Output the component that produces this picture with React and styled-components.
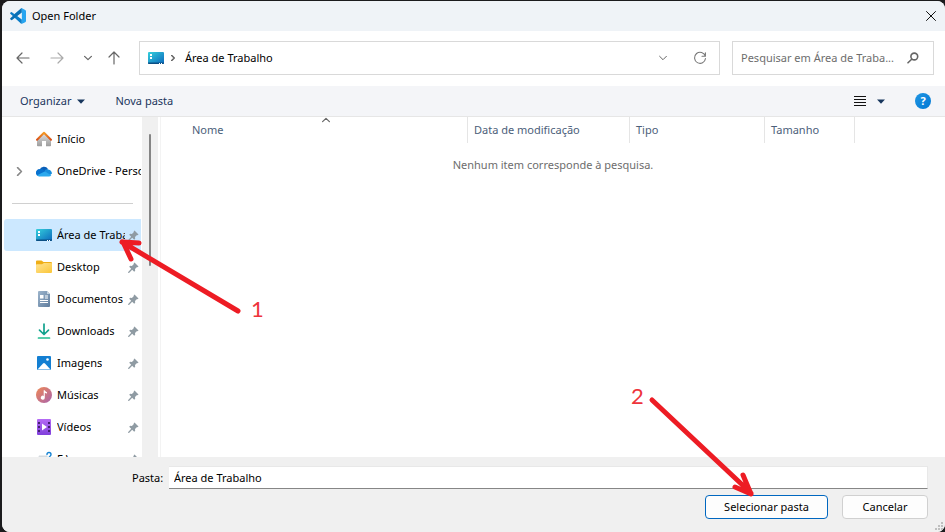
import React from "react";
import styled, { createGlobalStyle } from "styled-components";

const GlobalStyle = createGlobalStyle`
  *, *::before, *::after { box-sizing: border-box; }
  body {
    margin: 0;
    background: #1b1b1d;
    font-family: "Noto Sans", "Open Sans", sans-serif;
    font-size: 11px;
    line-height: 16px;
    color: #000;
  }
  button, input { font: inherit; color: inherit; }
  button { background: none; border: 0; padding: 0; }
  svg { display: block; flex: none; }
`;

const Screen = styled.div`
  position: relative;
  height: 100vh;
  padding: 1px 0 0 2px;
  overflow: hidden;
`;

const Dialog = styled.div`
  display: flex;
  flex-direction: column;
  height: 100%;
  border-radius: 8px;
  overflow: hidden;
  background: #fff;
`;

const TitleBar = styled.header`
  display: flex;
  align-items: center;
  gap: 6px;
  height: 30px;
  flex: none;
  padding: 0 8px;
  background: #eff3f7;
`;

const Title = styled.h1`
  flex: 1;
  margin: 0;
  font-size: 11px;
  font-weight: 400;
`;

const IconButton = styled.button`
  display: flex;
  align-items: center;
  justify-content: center;
  width: ${(p) => p.$width || 16}px;
  height: 24px;
  flex: none;
`;

const NavBar = styled.nav`
  display: flex;
  align-items: center;
  gap: 12px;
  flex: none;
  padding: 10px 11px 11px 13px;
`;

const NavButtons = styled.div`
  display: flex;
  align-items: center;
  gap: 13px;
  width: 112px;
`;

const Field = styled.div`
  display: flex;
  align-items: center;
  height: 34px;
  border: 1px solid #d9d9d9;
  background: #fff;
`;

const AddressBar = styled(Field)`
  flex: 1;
  gap: 6px;
  padding: 0 11px 0 8px;
`;

const Crumb = styled.button`
  flex: 1;
  padding-left: 3px;
  text-align: left;
`;

const AddressActions = styled.div`
  display: flex;
  gap: 21px;
`;

const SearchBox = styled(Field)`
  width: 202px;
  padding: 0 14px 0 8px;
`;

const SearchInput = styled.input`
  flex: 1;
  min-width: 0;
  padding: 0;
  border: 0;
  outline: 0;
  background: none;
  &::placeholder { color: #6d6d6d; opacity: 1; }
`;

const Toolbar = styled.div`
  display: flex;
  align-items: center;
  height: 31px;
  flex: none;
  padding: 0 14px 0 18px;
  border-bottom: 1px solid #e6e6e6;
  background: #f4f5f8;
  color: #1b365d;
`;

const ToolButton = styled.button`
  display: flex;
  align-items: center;
  gap: 6px;
  margin-right: 30px;
`;

const ViewTools = styled.div`
  display: flex;
  align-items: center;
  gap: 8px;
  margin-left: auto;
`;

const HelpButton = styled.button`
  width: 16px;
  height: 16px;
  margin-left: 20px;
  border-radius: 50%;
  background: linear-gradient(135deg, #2196e3, #0078d4);
  color: #fff;
  font-size: 11px;
  font-weight: 700;
  line-height: 16px;
  text-align: center;
`;

const Body = styled.div`
  display: flex;
  flex: 1;
  min-height: 0;
`;

const Sidebar = styled.aside`
  width: 140px;
  flex: none;
  padding: 6px 1px 0 2px;
  overflow: hidden;
`;

const List = styled.ul`
  margin: 0;
  padding: 0;
  list-style: none;
`;

const Place = styled.li`
  display: flex;
  align-items: center;
  height: 32px;
  border-radius: 3px 0 0 3px;
  background: ${(p) => (p.$selected ? "#cce8ff" : "transparent")};
`;

const Expander = styled.span`
  display: flex;
  justify-content: center;
  width: 30px;
  flex: none;
`;

const PlaceLink = styled.a`
  display: flex;
  align-items: center;
  gap: 5px;
  flex: 1;
  min-width: 0;
  padding-left: 2px;
  color: #000;
  text-decoration: none;
`;

const PlaceName = styled.span`
  overflow: hidden;
  white-space: nowrap;
`;

const Divider = styled.hr`
  height: 1px;
  margin: 16px 8px 15px;
  border: 0;
  background: #d0d0d0;
`;

const ScrollTrack = styled.div`
  width: 16px;
  flex: none;
  padding: 17px 0 0 7px;
  background: #f0f0f0;
`;

const ScrollThumb = styled.div`
  width: 2px;
  height: 132px;
  border-radius: 1px;
  background: #858585;
`;

const Main = styled.main`
  flex: 1;
  min-width: 0;
  margin-left: 2px;
  border-left: 1px solid #f3f3f3;
`;

const FileTable = styled.table`
  width: 100%;
  table-layout: fixed;
  border-collapse: separate;
  border-spacing: 0;
`;

const Column = styled.col`
  width: ${(p) => (p.$width ? `${p.$width}px` : "auto")};
`;

const HeadCell = styled.th`
  position: relative;
  height: 26px;
  padding: 0 0 0 ${(p) => (p.$first ? 31 : 6)}px;
  border-right: ${(p) => (p.$last ? 0 : "1px solid #e5e5e5")};
  color: #4c607a;
  font-weight: 400;
  text-align: left;
`;

const SortMark = styled.span`
  position: absolute;
  top: -1px;
  left: 31px;
  right: 8px;
  display: flex;
  justify-content: center;
`;

const EmptyCell = styled.td`
  height: 44px;
  padding: 0;
  color: #6d6d6d;
  text-align: center;
`;

const Footer = styled.footer`
  position: relative;
  flex: none;
  padding: 9px 17px 13px 130px;
  background: #f0f0f0;
`;

const FolderRow = styled.div`
  display: flex;
  align-items: center;
  gap: 6px;
`;

const FolderLabel = styled.label`
  width: 31px;
  white-space: nowrap;
`;

const FolderInput = styled.input`
  flex: 1;
  min-width: 0;
  height: 23px;
  padding: 0 5px;
  border: 1px solid #e8e8e8;
  border-bottom-color: #868686;
  border-left: 0;
  outline: 0;
  background: #fff;
`;

const Actions = styled.div`
  display: flex;
  justify-content: flex-end;
  gap: 14px;
  padding-top: 6px;
`;

const ActionButton = styled.button`
  width: ${(p) => p.$width}px;
  height: 24px;
  border: 1px solid ${(p) => (p.$primary ? "#0067c0" : "#d0d0d0")};
  border-radius: 4px;
  background: #fdfdfd;
`;

const Grip = styled.span`
  position: absolute;
  right: 1px;
  bottom: 1px;
`;

const Markup = styled.svg`
  position: absolute;
  top: 0;
  left: 0;
  pointer-events: none;
`;

const StepNumber = styled.span`
  position: absolute;
  top: ${(p) => p.$top}px;
  left: ${(p) => p.$left}px;
  color: #ee333b;
  font-family: Lato, sans-serif;
  font-size: 22px;
  line-height: 24px;
`;

const line = { fill: "none", strokeLinecap: "round", strokeLinejoin: "round" };

const VsCodeIcon = () => (
  <svg width="16" height="16" viewBox="0 0 100 100">
    <path d="M72 1 31 41 12 26q-3-2-6 0L2 30q-3 3 0 6l66 61 6 2V72L28 37Z" fill="#0a7dc8" />
    <path d="M2 64q-3 3 0 6l5 5q3 2 6 0L74 28V1q-3-1-6 2Z" fill="#0a70b4" />
    <path d="M68 4q6-4 6 4v84q0 8-6 4l7 3 20-10q5-2 5-8V20q0-6-5-8L75 1Z" fill="#27a5f0" />
  </svg>
);

const CloseIcon = () => (
  <svg width="10" height="10" viewBox="0 0 10 10" stroke="#111" {...line}>
    <path d="M.5.5l9 9M9.500.5l-9 9" />
  </svg>
);

const ArrowIcon = ({ turn = 0, color = "#666" }) => (
  <svg width="14" height="14" viewBox="0 0 14 14" stroke={color} strokeWidth="1.200" {...line}>
    <g transform={`rotate(${turn} 7 7)`}>
      <path d="M13 7H1M6 2 1 7l5 5" />
    </g>
  </svg>
);

const Chevron = ({ turn = 0, width = 8, color = "#666", weight = 1.2 }) => (
  <svg width={width} height={width} viewBox="0 0 8 8" stroke={color} strokeWidth={weight} {...line}>
    <path d="M.6 2.300 4 5.700l3.400-3.400" transform={`rotate(${turn} 4 4)`} />
  </svg>
);

const RefreshIcon = () => (
  <svg width="14" height="14" viewBox="0 0 14 14" stroke="#777" strokeWidth="1.100" {...line}>
    <path d="M12.300 5.200A5.500 5.500 0 1 0 12.500 7.500M12.400 1.800v3.500H9" />
  </svg>
);

const SearchIcon = () => (
  <svg width="12" height="12" viewBox="0 0 12 12" stroke="#666" strokeWidth="1.600" {...line}>
    <circle cx="7.300" cy="4.500" r="3.400" />
    <path d="M4.700 7.200 1 10.800" />
  </svg>
);

const DropCaret = () => (
  <svg width="8" height="5" viewBox="0 0 8 5">
    <path d="M0 .5h8L4 4.800Z" fill="#17365d" />
  </svg>
);

const ListIcon = () => (
  <svg width="12" height="12" viewBox="0 0 12 12" shapeRendering="crispEdges">
    <path d="M0 1.500h12M0 4.500h12M0 7.500h12M0 10.500h12" stroke="#111" />
  </svg>
);

const DesktopIcon = () => (
  <svg width="16" height="16" viewBox="0 0 16 16">
    <defs>
      <linearGradient id="desk" x1="0" y1="0" x2="1" y2="1">
        <stop stopColor="#35d0dc" />
        <stop offset="1" stopColor="#0b68bd" />
      </linearGradient>
    </defs>
    <rect y="2" width="16" height="12" rx="1" fill="url(#desk)" />
    <path d="M0 12.500h16v.5q0 1-1 1H1q-1 0-1-1Z" fill="#0b4f84" />
    <path d="M2 4h2v2H2zM2 7h2v2H2zM11 13h1v1h-1zM13 13h1v1h-1z" fill="#fff" />
  </svg>
);

const HomeIcon = () => (
  <svg width="16" height="16" viewBox="0 0 16 16">
    <defs>
      <linearGradient id="wall" x1="0" y1="0" x2="0" y2="1">
        <stop stopColor="#dedede" />
        <stop offset="1" stopColor="#9c9c9c" />
      </linearGradient>
      <linearGradient id="roof" x1="0" y1="0" x2="0" y2="1">
        <stop stopColor="#f59a23" />
        <stop offset="1" stopColor="#d8501a" />
      </linearGradient>
    </defs>
    <path d="M8 2.500 1 9v5.500q0 .8.8.8H6V10h4v5.300h4.200q.8 0 .8-.8V9Z" fill="url(#wall)" />
    <path d="M1 8.800 8 1.800l7 7" stroke="url(#roof)" strokeWidth="2" {...line} />
  </svg>
);

const CloudIcon = () => (
  <svg width="16" height="16" viewBox="0 0 16 16">
    <path d="M3.500 7A4.700 4.700 0 0 1 12 6l-4 4-6 2A3.300 3.300 0 0 1 3.500 6Z" fill="#0a5fb8" />
    <path d="M3.800 6.200Q6 5.500 8 7.200l5 4-10 2A3.500 3.500 0 0 1 3.800 6.200Z" fill="#0872cf" />
    <path d="M8.500 7.800Q10 5.800 12.300 6.500 15.500 7 16 10.500l-2.500 2Z" fill="#168ddd" />
    <path d="m8.700 8.400 6.600 3.900q-.8 1.200-2.500 1.200H4q-1.800 0-2.900-1.300Z" fill="#2ba9ee" />
  </svg>
);

const FolderIcon = () => (
  <svg width="16" height="16" viewBox="0 0 16 16">
    <defs>
      <linearGradient id="folder" x1="0" y1="0" x2="1" y2="1">
        <stop stopColor="#ffe393" />
        <stop offset="1" stopColor="#fbc638" />
      </linearGradient>
    </defs>
    <path d="M0 2.500q0-1 1-1h4.500L7.500 3H15q1 0 1 1v3H0Z" fill="#efae16" />
    <path d="M0 6q0-.7.800-.7H6L8 4h7.200q.8 0 .8.800V13q0 1-1 1H1q-1 0-1-1Z" fill="url(#folder)" />
  </svg>
);

const DocumentIcon = () => (
  <svg width="16" height="16" viewBox="0 0 16 16">
    <defs>
      <linearGradient id="doc" x1="0" y1="0" x2="1" y2="1">
        <stop stopColor="#9db5cc" />
        <stop offset="1" stopColor="#607d9e" />
      </linearGradient>
    </defs>
    <path d="M2 1q0-1 1-1h8l3 3v12q0 1-1 1H3q-1 0-1-1Z" fill="url(#doc)" />
    <path d="M11 0v3h3Z" fill="#c8d6e2" />
    <path d="M4 4h3.500v3.500H4zM9 4.500h3v1H9zM9 6.500h3v1H9zM4 9h8v1H4zM4 11h8v1H4z" fill="#fff" />
  </svg>
);

const DownloadIcon = () => (
  <svg width="16" height="16" viewBox="0 0 16 16" strokeWidth="1.700" {...line}>
    <path d="M8 1v10M3.500 7.200 8 11.500l4.500-4.300" stroke="#12a28d" />
    <path d="M2.500 15h11" stroke="#20bd90" />
  </svg>
);

const ImageIcon = () => (
  <svg width="16" height="16" viewBox="0 0 16 16">
    <rect x="1" y="1" width="14" height="14" rx="1" fill="#137fd2" />
    <path d="M1.500 14.500 7 8.500q1-1 2 0l5.500 6Z" fill="#fff" />
    <circle cx="11.500" cy="4.500" r="1.300" fill="#fff" />
  </svg>
);

const MusicIcon = () => (
  <svg width="16" height="16" viewBox="0 0 16 16">
    <defs>
      <linearGradient id="music" x1="0" y1="0" x2="1" y2="1">
        <stop stopColor="#ef8954" />
        <stop offset="1" stopColor="#a963ae" />
      </linearGradient>
    </defs>
    <circle cx="8" cy="8" r="8" fill="url(#music)" />
    <path d="M7.700 3.200h1q.8 1.600 2.300 2v1.300q-1.300 0-2.200-.8v5a2 2 0 1 1-1.100-1.800Z" fill="#fff" />
  </svg>
);

const VideoIcon = () => (
  <svg width="16" height="16" viewBox="0 0 16 16">
    <defs>
      <linearGradient id="video" x1="0" y1="0" x2="0" y2="1">
        <stop stopColor="#b56bf5" />
        <stop offset="1" stopColor="#8040db" />
      </linearGradient>
    </defs>
    <rect x="1" y="0" width="14" height="16" rx="1" fill="url(#video)" />
    <path d="M2 3h2v2H2zM2 7h2v2H2zM2 11h2v2H2zM12 3h2v2h-2zM12 7h2v2h-2zM12 11h2v2h-2z" fill="#43206f" />
    <path d="M6 4.500 11 8l-5 3.500Z" fill="#fff" />
  </svg>
);

const UnknownDriveIcon = () => (
  <svg width="16" height="16" viewBox="0 0 16 16">
    <path d="M3 4.500h8l3 5H1Z" fill="#d5dade" />
    <path d="M1 9.500h14v4H1Z" fill="#8c959c" />
    <path d="M11 3.500q0-2 2-2t2 2q0 1-1 1.700t-1 1.800" stroke="#1683d2" strokeWidth="1.400" {...line} />
  </svg>
);

const PinIcon = () => (
  <svg width="11" height="11" viewBox="0 0 11 11">
    <path d="m6.500.5 4 4-.8.8-.7-.2-2 2 .2 1.700-1 1-2-2L1 11l-1-.2.2-.8 3-3.200-2-2 1-1 1.700.2 2-2-.2-.7Z" fill="#8f9ba3" />
  </svg>
);

const GripIcon = () => (
  <svg width="9" height="9" viewBox="0 0 9 9" shapeRendering="crispEdges">
    <path d="M6 0h2v2H6zM3 3h2v2H3zM6 3h2v2H6zM0 6h2v2H0zM3 6h2v2H3zM6 6h2v2H6z" fill="#bfbfbf" />
  </svg>
);

const PLACES = [
  { name: "Início", icon: HomeIcon },
  { name: "OneDrive - Personal", icon: CloudIcon, expandable: true },
];

const PINNED = [
  { name: "Área de Trabalho", icon: DesktopIcon, selected: true },
  { name: "Desktop", icon: FolderIcon },
  { name: "Documentos", icon: DocumentIcon },
  { name: "Downloads", icon: DownloadIcon },
  { name: "Imagens", icon: ImageIcon },
  { name: "Músicas", icon: MusicIcon },
  { name: "Vídeos", icon: VideoIcon },
  { name: "F:\\", icon: UnknownDriveIcon },
];

const PinSlot = styled.span`
  width: 16px;
  flex: none;
  padding-left: 3px;
`;

function PlaceList({ places, pinned }) {
  return (
    <List>
      {places.map(({ name, icon: Icon, expandable, selected }) => (
        <Place key={name} $selected={selected}>
          <Expander>{expandable && <Chevron turn={-90} width={9} color="#888" weight={1.4} />}</Expander>
          <PlaceLink href="#" aria-current={selected ? "true" : undefined}>
            <Icon />
            <PlaceName>{name}</PlaceName>
          </PlaceLink>
          {pinned && <PinSlot><PinIcon /></PinSlot>}
        </Place>
      ))}
    </List>
  );
}

export default function App() {
  return (
    <Screen>
      <GlobalStyle />
      <Dialog role="dialog" aria-labelledby="dialog-title">
        <TitleBar>
          <VsCodeIcon />
          <Title id="dialog-title">Open Folder</Title>
          <IconButton $width={12} aria-label="Fechar"><CloseIcon /></IconButton>
        </TitleBar>

        <NavBar>
          <NavButtons>
            <IconButton aria-label="Voltar"><ArrowIcon /></IconButton>
            <IconButton $width={26} aria-label="Avançar"><ArrowIcon turn={180} color="#aaa" /></IconButton>
            <IconButton $width={10} aria-label="Locais recentes"><Chevron /></IconButton>
            <IconButton aria-label="Acima"><ArrowIcon turn={90} /></IconButton>
          </NavButtons>
          <AddressBar>
            <DesktopIcon />
            <Chevron turn={-90} width={6} weight={2} />
            <Crumb>Área de Trabalho</Crumb>
            <AddressActions>
              <IconButton aria-label="Locais anteriores"><Chevron weight={1} /></IconButton>
              <IconButton aria-label="Atualizar"><RefreshIcon /></IconButton>
            </AddressActions>
          </AddressBar>
          <SearchBox>
            <SearchInput aria-label="Pesquisar" placeholder="Pesquisar em Área de Traba..." />
            <SearchIcon />
          </SearchBox>
        </NavBar>

        <Toolbar>
          <ToolButton>Organizar <DropCaret /></ToolButton>
          <ToolButton>Nova pasta</ToolButton>
          <ViewTools>
            <IconButton $width={14} aria-label="Modo de exibição"><ListIcon /></IconButton>
            <IconButton $width={12} aria-label="Mais opções"><DropCaret /></IconButton>
            <HelpButton aria-label="Ajuda">?</HelpButton>
          </ViewTools>
        </Toolbar>

        <Body>
          <Sidebar>
            <PlaceList places={PLACES} />
            <Divider />
            <PlaceList places={PINNED} pinned />
          </Sidebar>
          <ScrollTrack><ScrollThumb /></ScrollTrack>
          <Main>
            <FileTable>
              <colgroup>
                <Column $width={307} />
                <Column $width={162} />
                <Column $width={135} />
                <Column $width={90} />
                <Column />
              </colgroup>
              <thead>
                <tr>
                  <HeadCell $first scope="col" aria-sort="ascending">
                    Nome
                    <SortMark><Chevron turn={180} /></SortMark>
                  </HeadCell>
                  <HeadCell scope="col">Data de modificação</HeadCell>
                  <HeadCell scope="col">Tipo</HeadCell>
                  <HeadCell scope="col">Tamanho</HeadCell>
                  <HeadCell as="td" $last />
                </tr>
              </thead>
              <tbody>
                <tr><EmptyCell colSpan={5}>Nenhum item corresponde à pesquisa.</EmptyCell></tr>
              </tbody>
            </FileTable>
          </Main>
        </Body>

        <Footer>
          <FolderRow>
            <FolderLabel htmlFor="folder">Pasta:</FolderLabel>
            <FolderInput id="folder" defaultValue="Área de Trabalho" />
          </FolderRow>
          <Actions>
            <ActionButton $width={123} $primary>Selecionar pasta</ActionButton>
            <ActionButton $width={86}>Cancelar</ActionButton>
          </Actions>
          <Grip><GripIcon /></Grip>
        </Footer>
      </Dialog>

      <Markup width="945" height="532" viewBox="0 0 945 532" stroke="#ed1c24" strokeWidth="5" {...line}>
        <path d="M238 311 122 242M139 243l-16-1 8 17" />
        <path d="M652 400 751 493M743 475l8 19-16-7" />
      </Markup>
      <StepNumber $top={297} $left={251}>1</StepNumber>
      <StepNumber $top={384} $left={631}>2</StepNumber>
    </Screen>
  );
}
